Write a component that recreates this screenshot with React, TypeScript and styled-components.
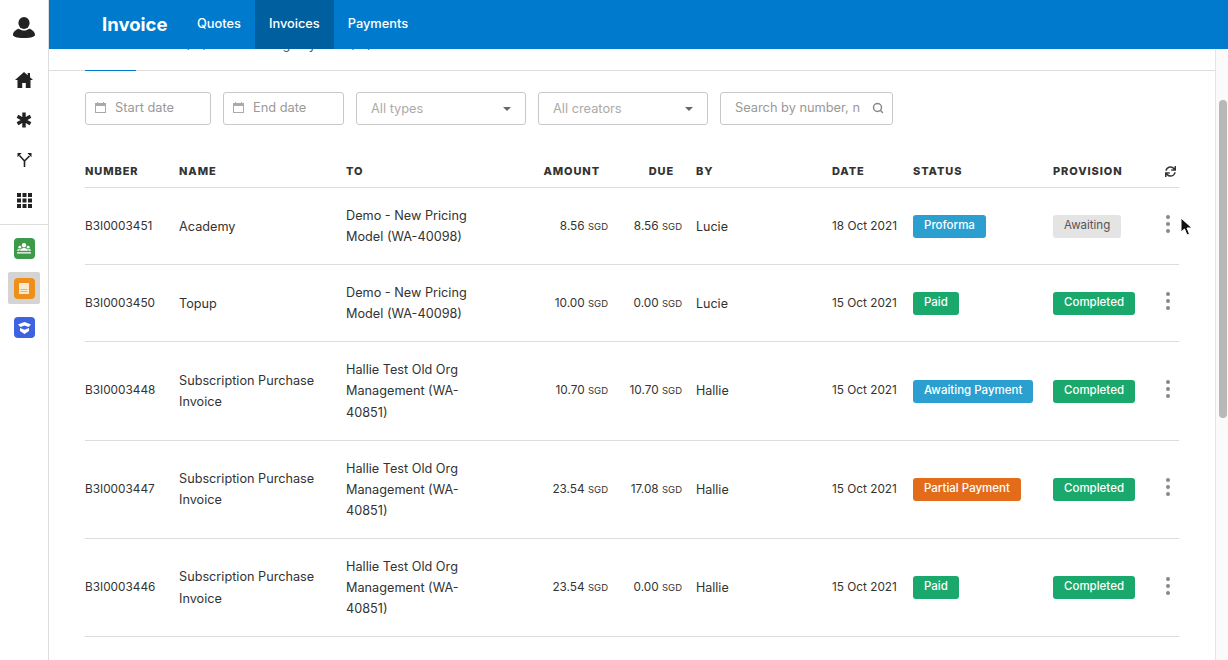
import React from 'react';
import styled, {createGlobalStyle} from "styled-components";
import {Search} from "lucide-react";
import {FaSync} from "react-icons/fa";

const GlobalStyle = createGlobalStyle`
    html, body {
        margin: 0;
        height: 100%;
        overflow: hidden;
    }
    body {
        font-family: "Inter", "Open Sans", sans-serif;
        color: #333;
        background: #fff;
    }
`

type Row = {
    number: string
    name: string[]
    to: string[]
    amount: string
    due: string
    by: string
    date: string
    status: string
    statusKind: "blue" | "green" | "orange"
    provision: string
    waiting?: boolean
}

const hallie = ["Hallie Test Old Org", "Management (WA-", "40851)"];
const demo = ["Demo - New Pricing", "Model (WA-40098)"];
const purchase = ["Subscription Purchase", "Invoice"];

const rows: Row[] = [
    {number: "B3I0003451", name: ["Academy"], to: demo, amount: "8.56", due: "8.56", by: "Lucie", date: "18 Oct 2021", status: "Proforma", statusKind: "blue", provision: "Awaiting", waiting: true},
    {number: "B3I0003450", name: ["Topup"], to: demo, amount: "10.00", due: "0.00", by: "Lucie", date: "15 Oct 2021", status: "Paid", statusKind: "green", provision: "Completed"},
    {number: "B3I0003448", name: purchase, to: hallie, amount: "10.70", due: "10.70", by: "Hallie", date: "15 Oct 2021", status: "Awaiting Payment", statusKind: "blue", provision: "Completed"},
    {number: "B3I0003447", name: purchase, to: hallie, amount: "23.54", due: "17.08", by: "Hallie", date: "15 Oct 2021", status: "Partial Payment", statusKind: "orange", provision: "Completed"},
    {number: "B3I0003446", name: purchase, to: hallie, amount: "23.54", due: "0.00", by: "Hallie", date: "15 Oct 2021", status: "Paid", statusKind: "green", provision: "Completed"},
];

const badgeColors = {
    blue: "#2a9fd0",
    green: "#1aa86c",
    orange: "#e36c1a",
};

const UserIcon = () => (
    <svg width="22" height="21" viewBox="0 0 22 21" fill="#222">
        <ellipse cx="11" cy="6" rx="5.600" ry="6"/>
        <path d="M0 18c0-3.500 3-5.500 6-6.300 1.200 1.200 3 1.800 5 1.800s3.800-.6 5-1.800c3 .8 6 2.800 6 6.300 0 1.500-3 3-11 3S0 19.500 0 18z"/>
    </svg>
);

const HomeIcon = () => (
    <svg width="18" height="16" viewBox="0 0 18 16" fill="#222">
        <path d="M9 0 0 8h2.500v8h4.700v-5h3.600v5h4.700V8H18l-3-2.700V1h-2.300v2.300z"/>
    </svg>
);

const AsteriskIcon = () => (
    <svg width="16" height="16" viewBox="0 0 16 16" stroke="#222" strokeWidth="3.400" fill="none">
        <path d="M8 .5v15M1.500 4.200l13 7.600M14.500 4.200l-13 7.600"/>
    </svg>
);

const ForkIcon = () => (
    <svg width="15" height="14" viewBox="0 0 15 14" fill="none" stroke="#222" strokeWidth="1.600">
        <path d="M7.500 14V8L2.500 2.500M7.500 8 12.500 3"/>
        <path d="M.5 0h4.200L.5 4.200zM14.500 0h-4.200l4.200 4.200z" fill="#222" stroke="none"/>
    </svg>
);

const GridIcon = () => (
    <svg width="15" height="15" viewBox="0 0 15 15" fill="#222">
        {[0, 5.500, 11].map(y => [0, 5.500, 11].map(x => <rect key={`${x}-${y}`} x={x} y={y} width="4" height="4"/>))}
    </svg>
);

const CalendarIcon = () => (
    <svg width="11" height="11" viewBox="0 0 11 11" fill="none">
        <rect x=".5" y="1.500" width="10" height="9" stroke="#aaa"/>
        <rect x="0" y="1" width="11" height="3" fill="#aaa"/>
        <path d="M2.500 0v2M8.500 0v2" stroke="#aaa"/>
    </svg>
);

const GroupAppIcon = () => (
    <svg width="14" height="11" viewBox="0 0 14 11" fill="#fff">
        <circle cx="7" cy="2.300" r="2.200"/>
        <circle cx="2.800" cy="4.200" r="1.400"/>
        <circle cx="11.200" cy="4.200" r="1.400"/>
        <path d="M3 7.800C3 6 5 5 7 5s4 1 4 2.800zM0 7.800c0-1 .8-1.900 2.200-1.900.5 0 .6.900.4 1.900zM14 7.800c0-1-.8-1.900-2.200-1.900-.5 0-.6.900-.4 1.900zM0 9.300h14v1.200H0z"/>
    </svg>
);

const DocAppIcon = () => (
    <svg width="10" height="11" viewBox="0 0 10 11">
        <rect width="10" height="11" fill="#fbe9cf"/>
        <path d="M1.500 6.500h7M1.500 8.500h7" stroke="#e9a656" strokeWidth=".8"/>
    </svg>
);

const BoxAppIcon = () => (
    <svg width="13" height="12" viewBox="0 0 13 12" fill="#fff">
        <path d="M6.500 0 13 2.500 10.500 5l-4-1.500L2.500 5 0 2.500z"/>
        <path d="M2 6l4.500 1.800L11 6v3l-4.500 3L2 9z"/>
    </svg>
);

const Dots = () => (
    <DotsWrap>
        <i/><i/><i/>
    </DotsWrap>
);

const Cursor = () => (
    <CursorWrap width="13" height="19" viewBox="0 0 13 19">
        <path d="M1 1v14l3.500-3 2.500 6 2.500-1-2.500-6H12z" fill="#111" stroke="#fff" strokeWidth="1"/>
    </CursorWrap>
);

const App = () => (
    <Page>
        <GlobalStyle/>
        <Sidebar>
            <UserSlot><UserIcon/></UserSlot>
            <NavSlot><HomeIcon/></NavSlot>
            <NavSlot><AsteriskIcon/></NavSlot>
            <NavSlot><ForkIcon/></NavSlot>
            <NavSlot><GridIcon/></NavSlot>
            <SideDivider/>
            <AppSlot><AppTile $color="#3d9a48"><GroupAppIcon/></AppTile></AppSlot>
            <AppSlot $active><AppTile $color="#ee8f1c"><DocAppIcon/></AppTile></AppSlot>
            <AppSlot><AppTile $color="#3f63e0"><BoxAppIcon/></AppTile></AppSlot>
        </Sidebar>
        <Content>
            <Header>
                <Brand>Invoice</Brand>
                <HeaderLink>Quotes</HeaderLink>
                <HeaderLink $active>Invoices</HeaderLink>
                <HeaderLink>Payments</HeaderLink>
            </Header>
            <ScrollArea>
                <Main>
                    <Tabs>
                        <Tab $active>All</Tab>
                        <Tab>Draft (12)</Tab>
                        <Tab>Awaiting Payment (31)</Tab>
                    </Tabs>
                    <Filters>
                        <DateField $width={126}><CalendarIcon/><span>Start date</span></DateField>
                        <DateField $width={121}><CalendarIcon/><span>End date</span></DateField>
                        <SelectField $width={170}><span>All types</span><Caret/></SelectField>
                        <SelectField $width={170}><span>All creators</span><Caret/></SelectField>
                        <SearchField>
                            <span>Search by number, n</span>
                            <Search size={12} color="#888" strokeWidth={3}/>
                        </SearchField>
                    </Filters>
                    <Table>
                        <colgroup>
                            <col width="94"/>
                            <col width="167"/>
                            <col width="170"/>
                            <col width="92"/>
                            <col width="74"/>
                            <col width="150"/>
                            <col width="81"/>
                            <col width="140"/>
                            <col width="112"/>
                            <col width="14"/>
                        </colgroup>
                        <thead>
                            <tr>
                                <Th>Number</Th>
                                <Th>Name</Th>
                                <Th>To</Th>
                                <AmountTh>Amount</AmountTh>
                                <AmountTh>Due</AmountTh>
                                <ByTh>By</ByTh>
                                <Th>Date</Th>
                                <Th>Status</Th>
                                <Th>Provision</Th>
                                <Th><RefreshIcon size={11} color="#333"/></Th>
                            </tr>
                        </thead>
                        <tbody>
                            {rows.map(row => (
                                <tr key={row.number}>
                                    <Td>{row.number}</Td>
                                    <Td>{row.name.map(line => <Line key={line}>{line}</Line>)}</Td>
                                    <Td>{row.to.map(line => <Line key={line}>{line}</Line>)}</Td>
                                    <AmountTd>{row.amount} <Currency>SGD</Currency></AmountTd>
                                    <AmountTd>{row.due} <Currency>SGD</Currency></AmountTd>
                                    <ByTd>{row.by}</ByTd>
                                    <Td>{row.date}</Td>
                                    <Td><Badge $color={badgeColors[row.statusKind]}>{row.status}</Badge></Td>
                                    <Td>
                                        {row.waiting
                                            ? <WaitingBadge>{row.provision}</WaitingBadge>
                                            : <Badge $color={badgeColors.green}>{row.provision}</Badge>}
                                    </Td>
                                    <Td><Dots/></Td>
                                </tr>
                            ))}
                        </tbody>
                    </Table>
                    <Cursor/>
                </Main>
                <Scrollbar><ScrollThumb/></Scrollbar>
            </ScrollArea>
        </Content>
    </Page>
);

export default App;

const Page = styled.div`
    display: flex;
    width: 1228px;
    height: 660px;
    overflow: hidden;
`

const Sidebar = styled.aside`
    width: 49px;
    flex: none;
    box-sizing: border-box;
    display: flex;
    flex-direction: column;
    align-items: center;
    border-right: 1px solid #ddd;
`

const UserSlot = styled.div`
    height: 54px;
    display: flex;
    align-items: center;
    justify-content: center;
    margin-bottom: 6px;
`

const NavSlot = styled.div`
    height: 40px;
    width: 100%;
    display: flex;
    align-items: center;
    justify-content: center;
`

const SideDivider = styled.div`
    width: 100%;
    height: 1px;
    background: #ddd;
    margin: 4px 0 7.500px;
`

const AppSlot = styled.div<{ $active?: boolean }>`
    width: 32px;
    height: 32px;
    margin-bottom: 7.500px;
    border-radius: 2px;
    display: flex;
    align-items: center;
    justify-content: center;
    background: ${props => props.$active ? "#d4d4d4" : "transparent"};
`

const AppTile = styled.div<{ $color: string }>`
    width: 21px;
    height: 21px;
    border-radius: 4px;
    display: flex;
    align-items: center;
    justify-content: center;
    background: ${props => props.$color};
`

const Content = styled.div`
    flex: 1;
    min-width: 0;
    display: flex;
    flex-direction: column;
`

const Header = styled.header`
    height: 49px;
    flex: none;
    display: flex;
    align-items: stretch;
    padding-left: 53px;
    background: #007acc;
    color: #fff;
    position: relative;
    z-index: 2;
`

const Brand = styled.div`
    font-size: 18.500px;
    font-weight: 700;
    line-height: 49px;
    width: 81px;
`

const HeaderLink = styled.a<{ $active?: boolean }>`
    padding: 0 14px;
    font-size: 12.800px;
    font-weight: 500;
    line-height: 47px;
    color: #fff;
    background: ${props => props.$active ? "#005f9e" : "transparent"};
`

const ScrollArea = styled.div`
    flex: 1;
    min-height: 0;
    display: flex;
    overflow: hidden;
`

const Main = styled.main`
    flex: 1;
    min-width: 0;
    position: relative;
`

const Tabs = styled.div`
    display: flex;
    height: 21px;
    padding-left: 36px;
    border-bottom: 1px solid #ddd;
    align-items: flex-start;
`

const Tab = styled.div<{ $active?: boolean }>`
    font-size: 12.700px;
    line-height: 21px;
    margin-top: -15px;
    height: 37px;
    min-width: 51px;
    padding: 0 16px;
    box-sizing: border-box;
    white-space: nowrap;
    color: #555;
    border-bottom: ${props => props.$active ? "1px solid #007acc" : "none"};
`

const Filters = styled.div`
    display: flex;
    gap: 12px;
    padding: 21px 0 0 36px;
`

const fieldBase = `
    height: 33px;
    box-sizing: border-box;
    border: 1px solid #c8c8c8;
    border-radius: 3px;
    display: flex;
    align-items: center;
    font-size: 12.800px;
    color: #999;
`

const DateField = styled.div<{ $width: number }>`
    ${fieldBase}
    width: ${props => props.$width}px;
    padding: 0 0 2px 9px;
    gap: 9px;
`

const SelectField = styled.div<{ $width: number }>`
    ${fieldBase}
    width: ${props => props.$width}px;
    padding: 0 14px;
    justify-content: space-between;
    color: #aaa;
`

const Caret = styled.i`
    width: 0;
    height: 0;
    border-left: 4px solid transparent;
    border-right: 4px solid transparent;
    border-top: 4px solid #666;
`

const SearchField = styled.div`
    ${fieldBase}
    width: 173px;
    padding: 0 8px 2px 14px;
    justify-content: space-between;
    white-space: nowrap;
    overflow: hidden;
`

const Table = styled.table`
    width: 1094px;
    margin: 39px 0 0 36px;
    border-collapse: collapse;
    table-layout: fixed;
    font-size: 11.800px;
`

const Th = styled.th`
    padding: 0 0 9px;
    height: 14px;
    line-height: 14px;
    font-size: 11px;
    font-weight: 800;
    letter-spacing: 0.900px;
    text-transform: uppercase;
    text-align: left;
    white-space: nowrap;
    border-bottom: 1px solid #ddd;
    color: #333;
`

const RefreshIcon = styled(FaSync)`
    vertical-align: -2px;
`

const AmountTh = styled(Th)`
    text-align: right;
    padding-right: 8px;
`

const ByTh = styled(Th)`
    padding-left: 14px;
`

const Td = styled.td`
    padding: 17px 0;
    line-height: 21.100px;
    vertical-align: middle;
    text-align: left;
    border-bottom: 1px solid #ddd;
    white-space: nowrap;
    color: #333;
`

const AmountTd = styled(Td)`
    text-align: right;
`

const ByTd = styled(Td)`
    padding-left: 14px;
    font-size: 12.500px;
`

const Line = styled.div`
    font-size: 12.700px;
`

const Currency = styled.span`
    font-size: 9.500px;
`

const Badge = styled.span<{ $color: string }>`
    display: inline-block;
    height: 23px;
    line-height: 21px;
    padding: 0 11px;
    border-radius: 3px;
    font-size: 11.500px;
    font-weight: 500;
    color: #fff;
    background: ${props => props.$color};
`

const WaitingBadge = styled(Badge).attrs({$color: "#e4e4e4"})`
    color: #555;
    font-weight: 400;
`

const DotsWrap = styled.span`
    display: inline-flex;
    flex-direction: column;
    gap: 3px;
    vertical-align: middle;
    margin: 0 0 4px 1px;

    i {
        width: 4px;
        height: 4px;
        border-radius: 50%;
        background: #888;
    }
`

const CursorWrap = styled.svg`
    position: absolute;
    left: 1131px;
    top: 168px;
`

const Scrollbar = styled.div`
    width: 13px;
    flex: none;
    box-sizing: border-box;
    border-left: 1px solid #e5e5e5;
    background: #fafafa;
    padding: 51px 0 0 3px;
`

const ScrollThumb = styled.div`
    width: 8px;
    height: 318px;
    border-radius: 4px;
    background: #b8b8b6;
`
